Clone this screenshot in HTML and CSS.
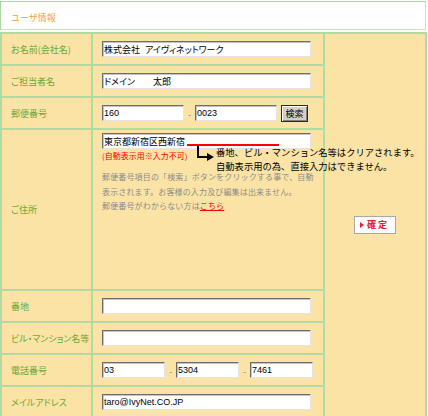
FILE: index.html
```html
<!DOCTYPE html>
<html lang="ja">
<head>
<meta charset="utf-8">
<title>ユーザ情報</title>
<link rel="stylesheet" href="styles.css">
</head>
<body>
<div class="page">
  <div class="header"><span class="title">ユーザ情報</span></div>
  <div class="form">
    <div class="cell side"><a class="confirm" href="#"><span class="tri"></span>確 定</a></div>

    <div class="cell label">お名前(会社名)</div>
    <div class="cell field"><input class="inp w-full" type="text" value="株式会社  アイヴィネットワーク"></div>

    <div class="cell label">ご担当者名</div>
    <div class="cell field"><input class="inp w-full" type="text" value="ドメイン　　太郎"></div>

    <div class="cell label">郵便番号</div>
    <div class="cell field">
      <input class="inp w-zip" type="text" value="160"><span class="dash">-</span><input class="inp w-zip" type="text" value="0023"><button class="btn" type="button">検索</button>
    </div>

    <div class="cell label">ご住所</div>
    <div class="cell field addr">
      <input class="inp w-full" type="text" value="東京都新宿区西新宿">
      <div class="note">(自動表示用※入力不可)</div>
      <div class="help">
        <div class="help-line">郵便番号項目の「検索」ボタンをクリックする事で、自動</div>
        <div class="help-line">表示されます。お客様の入力及び編集は出来ません。</div>
        <div class="help-line">郵便番号がわからない方は<a href="#">こちら</a></div>
      </div>
      <span class="redline"></span>
      <span class="arrow-v"></span>
      <span class="arrow-h"></span>
      <span class="arrow-head"></span>
      <div class="callout">
        <div class="callout-line">番地、ビル・マンション名等はクリアされます。</div>
        <div class="callout-line">自動表示用の為、直接入力はできません。</div>
      </div>
    </div>

    <div class="cell label">番地</div>
    <div class="cell field"><input class="inp w-full" type="text" value=""></div>

    <div class="cell label">ビル・マンション名等</div>
    <div class="cell field"><input class="inp w-full" type="text" value=""></div>

    <div class="cell label">電話番号</div>
    <div class="cell field">
      <input class="inp w-tel" type="text" value="03"><span class="dash">-</span><input class="inp w-tel" type="text" value="5304"><span class="dash">-</span><input class="inp w-tel" type="text" value="7461">
    </div>

    <div class="cell label">メイルアドレス</div>
    <div class="cell field"><input class="inp w-full" type="text" value="taro@IvyNet.CO.JP"></div>
  </div>
</div>
</body>
</html>
```
FILE: styles.css
```css
html, body {
  margin: 0;
  padding: 0;
  background: #ffffff;
}
body {
  font-family: "Noto Sans CJK JP", sans-serif;
  overflow: hidden;
}
.page {
  width: 427px;
}
.header {
  box-sizing: border-box;
  width: 426px;
  height: 29px;
  margin: 1px 0 2px;
  border: 1px solid #a9d8a0;
  border-bottom-color: #c3e5b9;
  border-right-color: #c3e5b9;
  background: #ffffff;
  display: flex;
  align-items: center;
  padding: 3px 0 0 10px;
}
.title {
  color: #f6a040;
  font-size: 9px;
}
.form {
  display: grid;
  grid-template-columns: 89px 230px 100px;
  grid-template-rows: repeat(3, 30px) 159px repeat(4, 30px);
  gap: 2px;
  padding: 2px 2px 0;
  background: #b0dba2;
}
.cell {
  background: #fbe3a5;
}
.label {
  display: flex;
  align-items: center;
  padding-left: 9px;
  color: #68a838;
  font-size: 9px;
  font-feature-settings: "palt";
  white-space: nowrap;
}
.field {
  display: flex;
  align-items: center;
  padding-left: 9px;
}
.field.addr {
  display: block;
  padding-top: 3px;
  position: relative;
}
.side {
  grid-column: 3;
  grid-row: 1 / -1;
  display: flex;
  align-items: center;
  justify-content: center;
}
.inp {
  display: block;
  box-sizing: border-box;
  height: 16px;
  margin: 0;
  padding: 0 0 0 1px;
  border: 1px solid;
  border-color: #6c6c6c #e4e4e4 #e4e4e4 #6c6c6c;
  box-shadow: inset 1px 1px 0 #c4c4c4;
  background: #ffffff;
  color: #000000;
  font-family: "Liberation Sans", "Noto Sans CJK JP", sans-serif;
  font-size: 9px;
  font-feature-settings: "palt";
  outline: none;
}
.w-full { width: 209px; }
.w-zip { width: 82px; }
.w-tel { width: 63px; }
.dash {
  width: 11px;
  text-align: center;
  color: #888888;
  font-size: 9px;
  padding-top: 3px;
}
.btn {
  box-sizing: border-box;
  width: 27px;
  height: 17px;
  margin: 0 0 0 4px;
  padding: 0;
  background: #d4d0c8;
  border: 1px solid #2a2a2a;
  box-shadow: inset 1px 1px 0 #ffffff, inset -1px -1px 0 #808080;
  color: #000000;
  font-family: "Noto Sans CJK JP", sans-serif;
  font-size: 9px;
  line-height: 13px;
}
.note {
  margin-top: 1px;
  color: #ff0000;
  font-size: 8px;
  line-height: 12px;
  white-space: nowrap;
}
.help {
  margin-top: 10px;
  display: flex;
  flex-direction: column;
  gap: 5.5px;
  color: #8c8c8c;
  font-size: 8px;
  letter-spacing: 0.15px;
}
.help-line {
  line-height: 9px;
  white-space: nowrap;
}
.help a {
  color: #ff0000;
  text-decoration: underline;
}
.redline {
  position: absolute;
  left: 94px;
  top: 14px;
  width: 92px;
  height: 2px;
  background: #ff0000;
}
.arrow-v {
  position: absolute;
  left: 104px;
  top: 16px;
  width: 2px;
  height: 12px;
  background: #000000;
}
.arrow-h {
  position: absolute;
  left: 104px;
  top: 26px;
  width: 11px;
  height: 2px;
  background: #000000;
}
.arrow-head {
  position: absolute;
  left: 114px;
  top: 23px;
  width: 0;
  height: 0;
  border-left: 7px solid #000000;
  border-top: 4px solid transparent;
  border-bottom: 4px solid transparent;
}
.callout {
  position: absolute;
  left: 123px;
  top: 16px;
  color: #000000;
  font-size: 9.3px;
}
.callout-line {
  line-height: 13.5px;
  white-space: nowrap;
}
.confirm {
  box-sizing: border-box;
  width: 42px;
  height: 18px;
  margin-top: -2px;
  border: 1px solid #a8a8a8;
  background: #ffffff;
  display: flex;
  align-items: center;
  gap: 3px;
  padding-left: 5px;
  color: #e8202a;
  font-size: 9px;
  font-weight: bold;
  text-decoration: none;
  white-space: nowrap;
}
.tri {
  width: 0;
  height: 0;
  border-left: 4px solid #e8202a;
  border-top: 3px solid transparent;
  border-bottom: 3px solid transparent;
}
```
